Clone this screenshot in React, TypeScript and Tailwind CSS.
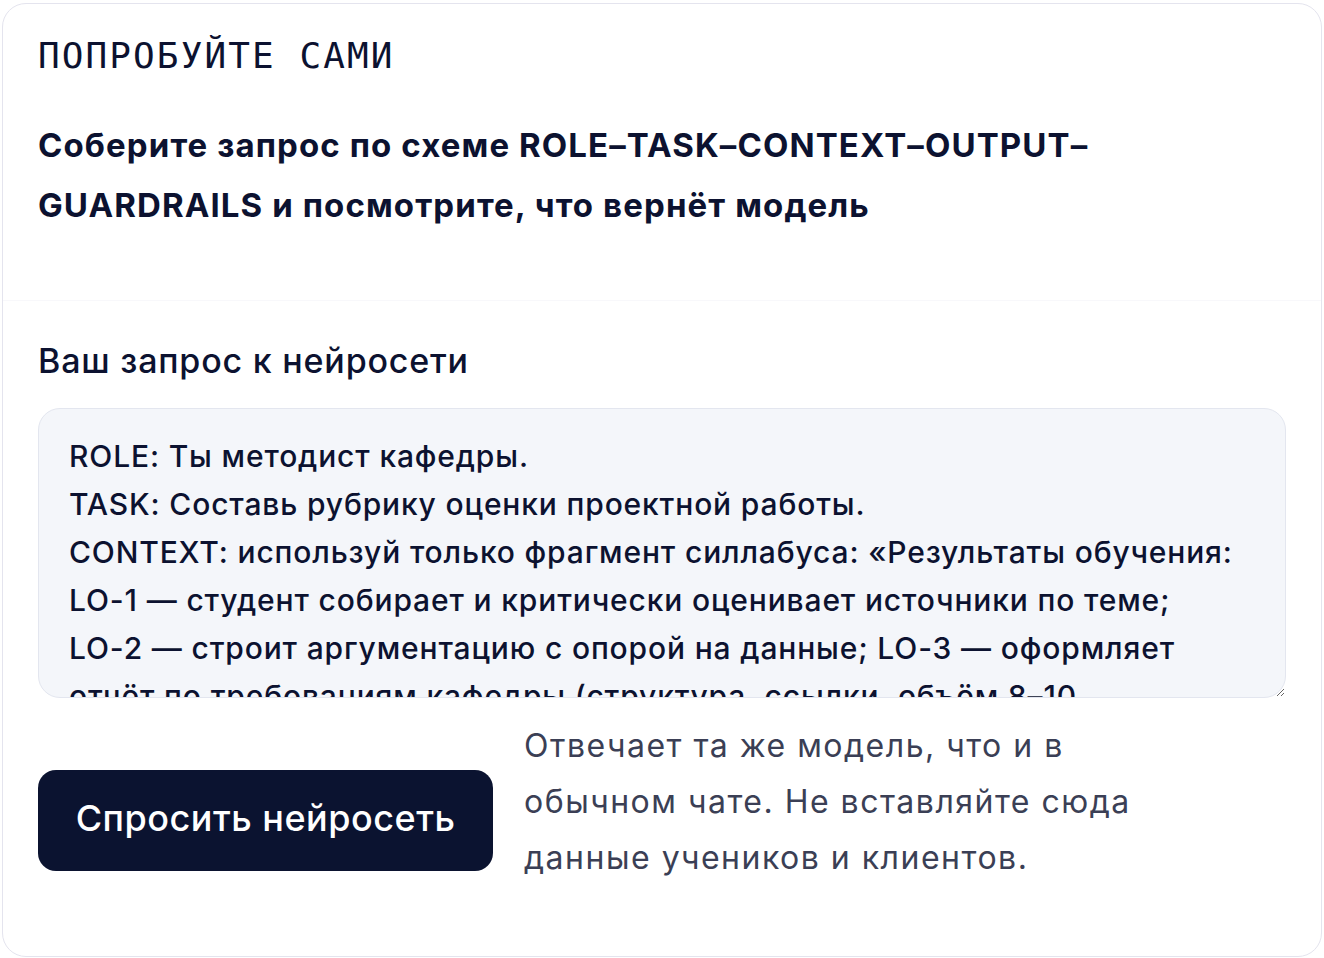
import React from 'react';

const PROMPT = `ROLE: Ты методист кафедры.
TASK: Составь рубрику оценки проектной работы.
CONTEXT: используй только фрагмент силлабуса: «Результаты обучения:
LO-1 — студент собирает и критически оценивает источники по теме;
LO-2 — строит аргументацию с опорой на данные; LO-3 — оформляет
отчёт по требованиям кафедры (структура, ссылки, объём 8–10 страниц)».
OUTPUT: таблица с критериями, уровнями и баллами.
GUARDRAILS: не добавляй критерии, которых нет во фрагменте.`;

export default function App() {
  return (
    <div className="bg-white px-[2px] pt-[3px] font-['Inter','Noto_Sans',sans-serif] text-[#0c1230]">
      <div className="h-[954px] rounded-[24px] border border-[#e4e4ee] bg-white">
        {/* header */}
        <div className="border-b border-[#f8f8fb] px-[35px] pt-[32px] pb-[65px]">
          <div className="font-['DejaVu_Sans_Mono',monospace] text-[36px] leading-[40px] tracking-[2.1px] uppercase">
            Попробуйте сами
          </div>
          <h2 className="mt-[39px] text-[33px] leading-[60px] font-bold tracking-[1.1px]">
            Соберите запрос по схеме ROLE–TASK–CONTEXT–OUTPUT–
            <br />
            GUARDRAILS и посмотрите, что вернёт модель
          </h2>
        </div>

        {/* form */}
        <div className="px-[35px] pt-[40px]">
          <label className="block text-[34px] leading-[40px] font-medium tracking-[0.8px]">Ваш запрос к нейросети</label>
          <textarea
            defaultValue={PROMPT}
            className="mt-[27px] block h-[290px] w-full overflow-hidden rounded-[22px] border border-[#e3e6ef] bg-[#f4f6fa] px-[30px] pt-[23px] text-[30px] leading-[48px] font-medium tracking-[0.85px] text-[#0c1230] outline-none"
          />

          <div className="mt-[20px] flex items-start gap-[31px]">
            <button className="mt-[52px] flex h-[101px] w-[455px] shrink-0 items-center justify-center rounded-[18px] bg-[#0b1330] pb-[6px] text-[36px] font-medium tracking-[0.5px] text-white">
              Спросить нейросеть
            </button>
            <p className="text-[32px] leading-[56px] tracking-[1.5px] text-[#3b3f55]">
              Отвечает та же модель, что и в
              <br />
              обычном чате. Не вставляйте сюда
              <br />
              данные учеников и клиентов.
            </p>
          </div>
        </div>
      </div>
    </div>
  );
}
